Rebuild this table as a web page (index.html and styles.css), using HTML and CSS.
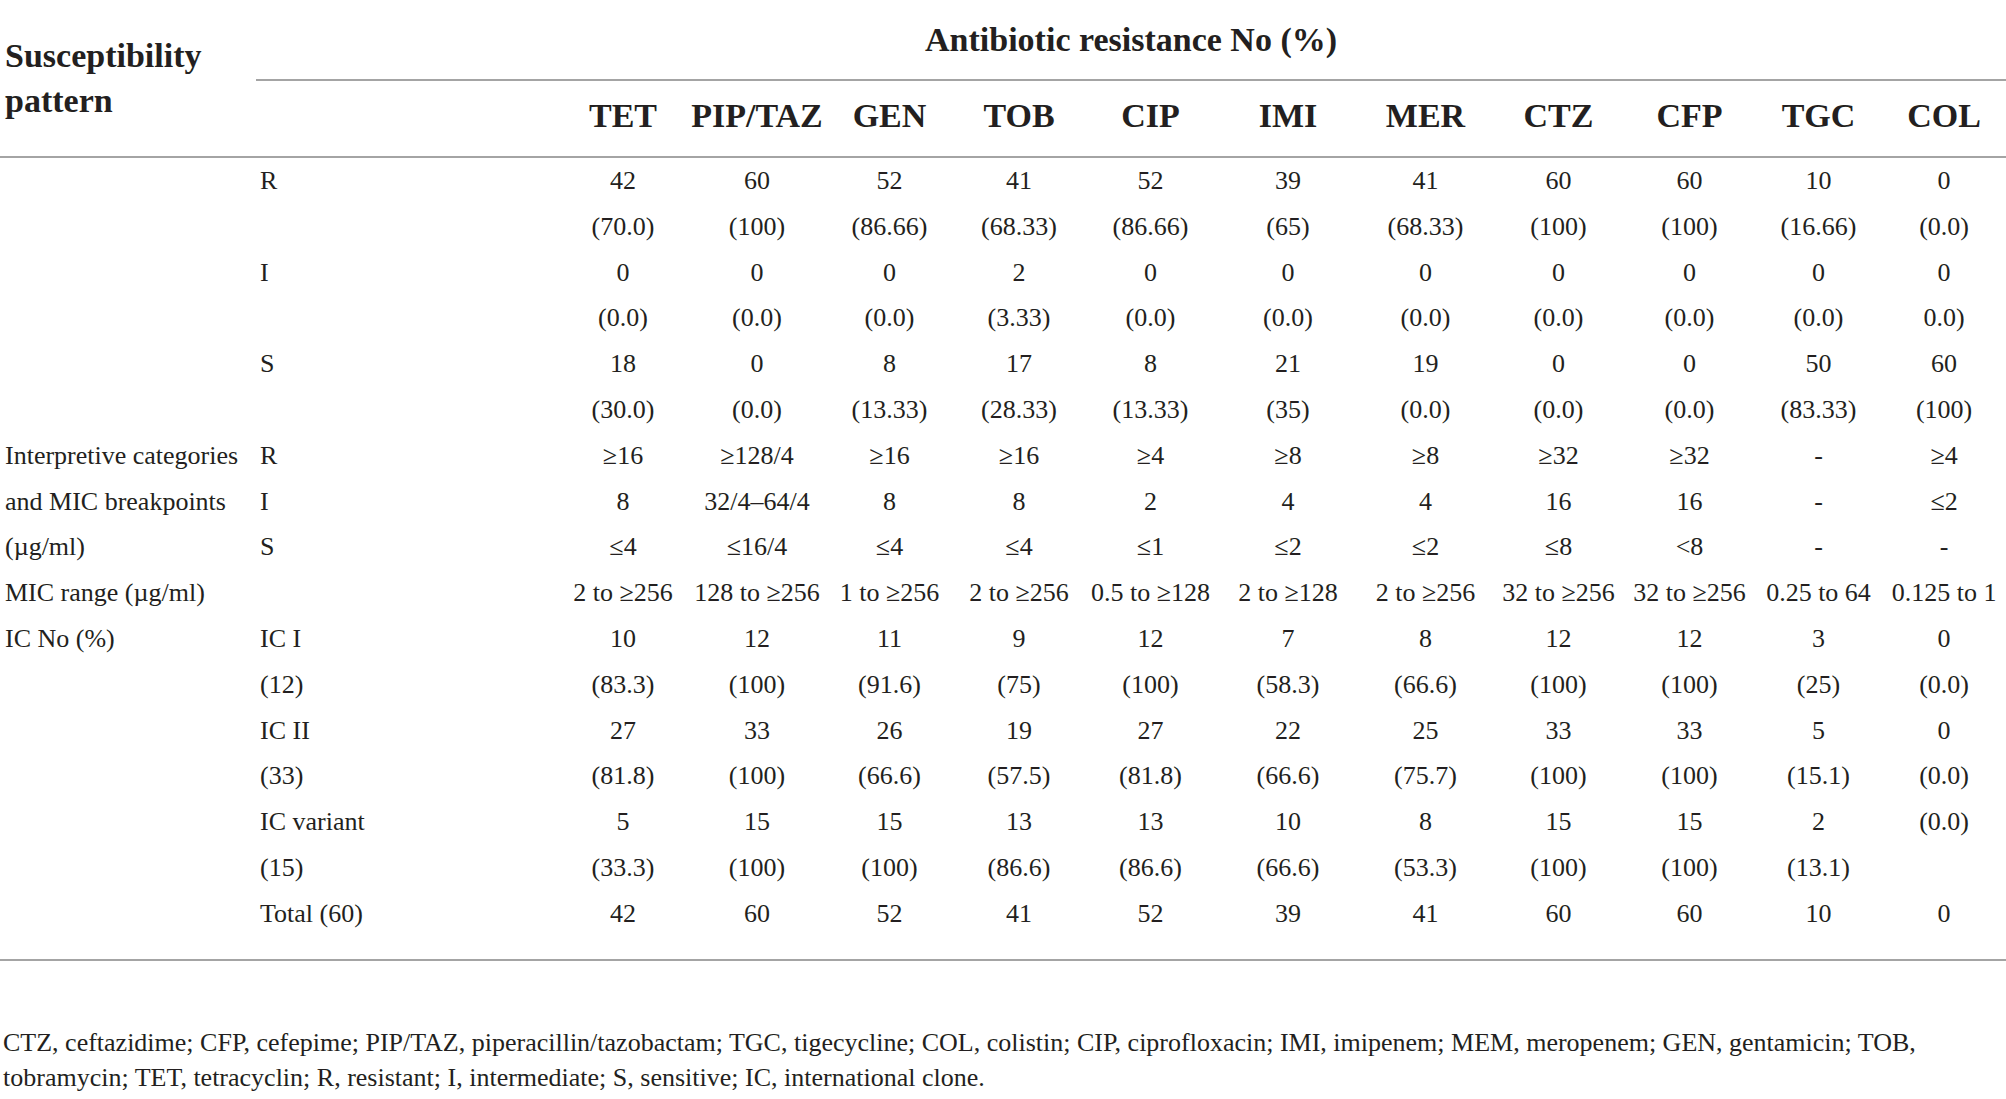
FILE: index.html
```html
<!DOCTYPE html>
<html lang="en">
<head>
<meta charset="utf-8">
<title>Antibiotic resistance</title>
<link rel="stylesheet" href="styles.css">
</head>
<body>
<table class="res">
  <colgroup>
    <col class="c-pattern">
    <col class="c-cat">
    <col class="c-tet">
    <col class="c-pip">
    <col class="c-gen">
    <col class="c-tob">
    <col class="c-cip">
    <col class="c-imi">
    <col class="c-mer">
    <col class="c-ctz">
    <col class="c-cfp">
    <col class="c-tgc">
    <col class="c-col">
  </colgroup>
  <thead>
    <tr class="h1">
      <th class="pattern" rowspan="2">Susceptibility<br>pattern</th>
      <th class="group" colspan="12">Antibiotic resistance No (%)</th>
    </tr>
    <tr class="h2">
      <th class="blank"></th>
      <th>TET</th><th>PIP/TAZ</th><th>GEN</th><th>TOB</th><th>CIP</th><th>IMI</th><th>MER</th><th>CTZ</th><th>CFP</th><th>TGC</th><th>COL</th>
    </tr>
  </thead>
  <tbody>
    <tr><td></td><td class="cat">R</td><td>42</td><td>60</td><td>52</td><td>41</td><td>52</td><td>39</td><td>41</td><td>60</td><td>60</td><td>10</td><td>0</td></tr>
    <tr><td></td><td class="cat"></td><td>(70.0)</td><td>(100)</td><td>(86.66)</td><td>(68.33)</td><td>(86.66)</td><td>(65)</td><td>(68.33)</td><td>(100)</td><td>(100)</td><td>(16.66)</td><td>(0.0)</td></tr>
    <tr><td></td><td class="cat">I</td><td>0</td><td>0</td><td>0</td><td>2</td><td>0</td><td>0</td><td>0</td><td>0</td><td>0</td><td>0</td><td>0</td></tr>
    <tr><td></td><td class="cat"></td><td>(0.0)</td><td>(0.0)</td><td>(0.0)</td><td>(3.33)</td><td>(0.0)</td><td>(0.0)</td><td>(0.0)</td><td>(0.0)</td><td>(0.0)</td><td>(0.0)</td><td>0.0)</td></tr>
    <tr><td></td><td class="cat">S</td><td>18</td><td>0</td><td>8</td><td>17</td><td>8</td><td>21</td><td>19</td><td>0</td><td>0</td><td>50</td><td>60</td></tr>
    <tr><td></td><td class="cat"></td><td>(30.0)</td><td>(0.0)</td><td>(13.33)</td><td>(28.33)</td><td>(13.33)</td><td>(35)</td><td>(0.0)</td><td>(0.0)</td><td>(0.0)</td><td>(83.33)</td><td>(100)</td></tr>
    <tr><td class="lab">Interpretive categories</td><td class="cat">R</td><td>≥16</td><td>≥128/4</td><td>≥16</td><td>≥16</td><td>≥4</td><td>≥8</td><td>≥8</td><td>≥32</td><td>≥32</td><td>-</td><td>≥4</td></tr>
    <tr><td class="lab">and MIC breakpoints</td><td class="cat">I</td><td>8</td><td>32/4–64/4</td><td>8</td><td>8</td><td>2</td><td>4</td><td>4</td><td>16</td><td>16</td><td>-</td><td>≤2</td></tr>
    <tr><td class="lab">(µg/ml)</td><td class="cat">S</td><td>≤4</td><td>≤16/4</td><td>≤4</td><td>≤4</td><td>≤1</td><td>≤2</td><td>≤2</td><td>≤8</td><td>&lt;8</td><td>-</td><td>-</td></tr>
    <tr><td class="lab">MIC range (µg/ml)</td><td class="cat"></td><td>2 to ≥256</td><td>128 to ≥256</td><td>1 to ≥256</td><td>2 to ≥256</td><td>0.5 to ≥128</td><td>2 to ≥128</td><td>2 to ≥256</td><td>32 to ≥256</td><td>32 to ≥256</td><td>0.25 to 64</td><td>0.125 to 1</td></tr>
    <tr><td class="lab">IC No (%)</td><td class="cat">IC I</td><td>10</td><td>12</td><td>11</td><td>9</td><td>12</td><td>7</td><td>8</td><td>12</td><td>12</td><td>3</td><td>0</td></tr>
    <tr><td></td><td class="cat">(12)</td><td>(83.3)</td><td>(100)</td><td>(91.6)</td><td>(75)</td><td>(100)</td><td>(58.3)</td><td>(66.6)</td><td>(100)</td><td>(100)</td><td>(25)</td><td>(0.0)</td></tr>
    <tr><td></td><td class="cat">IC II</td><td>27</td><td>33</td><td>26</td><td>19</td><td>27</td><td>22</td><td>25</td><td>33</td><td>33</td><td>5</td><td>0</td></tr>
    <tr><td></td><td class="cat">(33)</td><td>(81.8)</td><td>(100)</td><td>(66.6)</td><td>(57.5)</td><td>(81.8)</td><td>(66.6)</td><td>(75.7)</td><td>(100)</td><td>(100)</td><td>(15.1)</td><td>(0.0)</td></tr>
    <tr><td></td><td class="cat">IC variant</td><td>5</td><td>15</td><td>15</td><td>13</td><td>13</td><td>10</td><td>8</td><td>15</td><td>15</td><td>2</td><td>(0.0)</td></tr>
    <tr><td></td><td class="cat">(15)</td><td>(33.3)</td><td>(100)</td><td>(100)</td><td>(86.6)</td><td>(86.6)</td><td>(66.6)</td><td>(53.3)</td><td>(100)</td><td>(100)</td><td>(13.1)</td><td></td></tr>
    <tr class="last"><td></td><td class="cat">Total (60)</td><td>42</td><td>60</td><td>52</td><td>41</td><td>52</td><td>39</td><td>41</td><td>60</td><td>60</td><td>10</td><td>0</td></tr>
  </tbody>
</table>
<p class="note">CTZ, ceftazidime; CFP, cefepime; PIP/TAZ, piperacillin/tazobactam; TGC, tigecycline; COL, colistin; CIP, ciprofloxacin; IMI, imipenem; MEM, meropenem; GEN, gentamicin; TOB, tobramycin; TET, tetracyclin; R, resistant; I, intermediate; S, sensitive; IC, international clone.</p>
</body>
</html>
```

FILE: styles.css
```css
html, body {
  margin: 0;
  padding: 0;
  background: #ffffff;
}

body {
  font-family: "Liberation Serif", "Times New Roman", serif;
  color: #231f20;
  width: 2006px;
}

.res {
  width: 2006px;
  table-layout: fixed;
  border-collapse: collapse;
  border-bottom: 2px solid #a4a4a4;
}

.c-pattern { width: 256px; }
.c-cat { width: 300px; }
.c-tet { width: 134px; }
.c-pip { width: 134px; }
.c-gen { width: 131px; }
.c-tob { width: 128px; }
.c-cip { width: 135px; }
.c-imi { width: 140px; }
.c-mer { width: 135px; }
.c-ctz { width: 131px; }
.c-cfp { width: 131px; }
.c-tgc { width: 127px; }
.c-col { width: 124px; }

.res th {
  font-weight: 700;
  font-size: 34px;
  padding: 0;
  white-space: nowrap;
}

.h1 th.group {
  height: 79px;
  text-align: center;
  vertical-align: middle;
  border-bottom: 2px solid #a4a4a4;
}

.h1 th.pattern {
  text-align: left;
  vertical-align: top;
  line-height: 45px;
  padding: 33px 0 0 5px;
  border-bottom: 2px solid #a4a4a4;
}

.h2 th {
  height: 69px;
  text-align: center;
  vertical-align: middle;
  padding-bottom: 6px;
  border-bottom: 2px solid #a4a4a4;
}

.res td {
  font-size: 26px;
  line-height: 45.8px;
  padding: 0;
  text-align: center;
  vertical-align: middle;
  white-space: nowrap;
}

.res td.lab {
  text-align: left;
  padding-left: 5px;
}

.res td.cat {
  text-align: left;
  padding-left: 4px;
}

.res tr.last td {
  padding-bottom: 22px;
}

.note {
  margin: 64px 0 0 3px;
  width: 1990px;
  font-size: 26px;
  line-height: 35px;
}
```
